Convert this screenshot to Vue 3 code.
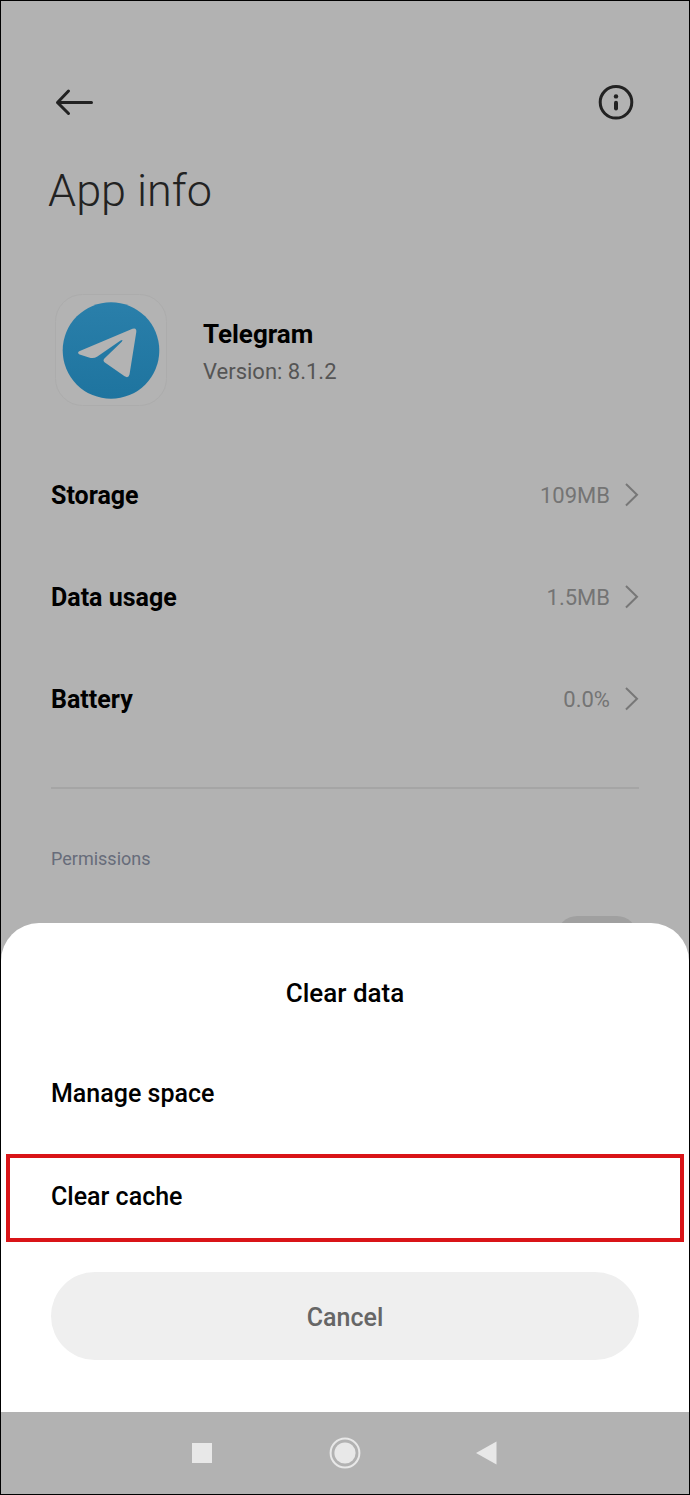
<script setup>
import { ref } from 'vue'

const usage = [
  { label: 'Storage', value: '109MB' },
  { label: 'Data usage', value: '1.5MB' },
  { label: 'Battery', value: '0.0%' },
]

const options = ['Manage space', 'Clear cache']
const highlighted = 'Clear cache'
const permission = ref(false)
</script>

<template>
  <div class="screen">
    <main class="info">
      <!-- Top bar -->
      <header class="topbar">
        <button type="button" class="icon-btn" aria-label="Back">
          <svg width="46" height="46" viewBox="0 0 46 46">
            <path d="M17.5 12 L6.5 23.5 L17.5 34.5 M6.5 23.5 H40.5" class="stroke" />
          </svg>
        </button>
        <button type="button" class="icon-btn" aria-label="Details">
          <svg width="46" height="46" viewBox="0 0 46 46">
            <circle cx="23" cy="23.300" r="15.8" class="stroke" />
            <circle cx="23" cy="17.4" r="2.2" fill="#222" />
            <path d="M23 23.8 V29.6" class="stroke stem" />
          </svg>
        </button>
      </header>

      <h1>App info</h1>

      <!-- App -->
      <section class="app">
        <svg class="logo" width="112" height="112" viewBox="0 0 112 112">
          <defs>
            <linearGradient id="blue" x1="0" y1="0" x2="0" y2="1">
              <stop offset="0" stop-color="#2a7faa" />
              <stop offset="1" stop-color="#1e749f" />
            </linearGradient>
          </defs>
          <rect x="0.5" y="0.5" width="111" height="111" rx="27" fill="#b3b3b3" stroke="#acacac" />
          <circle cx="56" cy="56.5" r="48.3" fill="url(#blue)" />
          <path
            d="M24.2 57.2 L77.5 34.8 Q81.8 33.4 81.3 38 L74.5 80.5 Q73.4 84.6 69.6 82.3 L49.5 68.2 Q47.6 66.6 49.4 64.6 L67 47.4 Q68.4 45.2 65.6 46.4 L42.4 62.4 Q38.5 64.8 34 63.4 L24.6 60.4 Q21.8 58.8 24.2 57.2 Z"
            fill="#b3b3b3"
          />
        </svg>
        <div class="app-text">
          <h2>Telegram</h2>
          <p>Version: 8.1.2</p>
        </div>
      </section>

      <!-- Usage -->
      <ul class="usage">
        <li v-for="item in usage" :key="item.label">
          <a href="#">
            <span class="label">{{ item.label }}</span>
            <span class="value">{{ item.value }}</span>
            <svg width="14" height="26" viewBox="0 0 14 26">
              <path d="M1 2 L12 12.7 L1 23.5" fill="none" stroke="#777" stroke-width="2" />
            </svg>
          </a>
        </li>
      </ul>

      <!-- Permissions -->
      <section class="permissions">
        <h3>Permissions</h3>
        <input v-model="permission" type="checkbox" class="switch" aria-label="Autostart" />
      </section>
    </main>

    <!-- Bottom sheet -->
    <section class="sheet" role="dialog" aria-labelledby="sheet-title">
      <h2 id="sheet-title">Clear data</h2>
      <button
        v-for="option in options"
        :key="option"
        type="button"
        class="option"
        :class="{ highlighted: option === highlighted }"
      >
        {{ option }}
      </button>
      <button type="button" class="cancel">Cancel</button>
    </section>

    <!-- System navigation -->
    <nav class="navbar">
      <button type="button" aria-label="Recent apps">
        <svg width="32" height="32" viewBox="0 0 32 32">
          <rect x="6" y="6" width="20" height="20" fill="#e8e8e8" />
        </svg>
      </button>
      <button type="button" aria-label="Home">
        <svg width="32" height="32" viewBox="0 0 32 32">
          <circle cx="16" cy="16" r="14.4" fill="none" stroke="#e8e8e8" stroke-width="2" />
          <circle cx="16" cy="16" r="10.6" fill="#e8e8e8" />
        </svg>
      </button>
      <button type="button" aria-label="Back">
        <svg width="32" height="32" viewBox="0 0 32 32">
          <path d="M4 16 L24.5 4.5 V27.5 Z" fill="#e8e8e8" />
        </svg>
      </button>
    </nav>
  </div>
</template>

<style>
body {
  margin: 0;
  background: #b2b2b2;
}
</style>

<style scoped>
.screen {
  box-sizing: border-box;
  min-height: 100vh;
  display: flex;
  flex-direction: column;
  border: 1px solid #000;
  background: #b2b2b2;
  font-family: Roboto, 'Liberation Sans', sans-serif;
  color: #000;
}

h1,
h2,
h3,
p,
ul {
  margin: 0;
  padding: 0;
}

button {
  padding: 0;
  border: 0;
  background: none;
  font-family: inherit;
}

svg {
  display: block;
}

.info {
  padding: 78px 50px 0;
}

/* Top bar */
.topbar {
  display: flex;
  justify-content: space-between;
}

.stroke {
  fill: none;
  stroke: #222;
  stroke-width: 3;
  stroke-linecap: round;
  stroke-linejoin: round;
}

.stem {
  stroke-width: 4;
}

h1 {
  margin: 38px -3px 0;
  font-size: 45px;
  line-height: 56px;
  font-weight: 300;
  color: #222;
}

/* App */
.app {
  display: flex;
  align-items: center;
  gap: 36px;
  margin-top: 75px;
  padding: 0 4px;
}

.app-text {
  padding-top: 6px;
}

.app h2 {
  font-size: 26px;
  line-height: 38px;
  font-weight: 700;
}

.app p {
  font-size: 22px;
  line-height: 38px;
  color: #555;
}

/* Usage */
.usage {
  margin-top: 38px;
  padding-bottom: 37px;
  border-bottom: 2px solid #a5a5a5;
  list-style: none;
}

.usage a {
  display: flex;
  align-items: center;
  height: 102px;
  color: inherit;
  text-decoration: none;
}

.label {
  flex: 1;
  font-size: 25px;
  font-weight: 700;
}

.value {
  margin-right: 15px;
  font-size: 22px;
  color: #747474;
}

/* Permissions */
.permissions {
  display: flex;
  flex-direction: column;
  padding-top: 57px;
}

.permissions h3 {
  font-size: 18px;
  line-height: 26px;
  font-weight: 400;
  color: #676c7a;
}

.switch {
  appearance: none;
  align-self: flex-end;
  width: 80px;
  height: 40px;
  margin: 44px 2px 0;
  border-radius: 20px;
  background: #a0a0a0;
}

/* Bottom sheet */
.sheet {
  z-index: 1;
  display: flex;
  flex-direction: column;
  margin-top: -33px;
  padding-bottom: 52px;
  border-radius: 38px 38px 0 0;
  background: #fff;
}

.sheet h2 {
  padding: 51px 0 30px;
  font-size: 26px;
  line-height: 38px;
  font-weight: 500;
  text-align: center;
}

.option {
  height: 102px;
  padding: 0 50px;
  font-size: 25px;
  font-weight: 500;
  color: #000;
  text-align: left;
}

.option.highlighted {
  height: 88px;
  margin: 10px 5px 30px;
  padding: 0 41px 4px;
  border: 4px solid #d91418;
}

.cancel {
  height: 88px;
  margin: 0 50px;
  padding-top: 2px;
  border-radius: 44px;
  background: #efefef;
  font-size: 25px;
  font-weight: 500;
  color: #666;
}

/* System navigation */
.navbar {
  flex: 1;
  display: flex;
  justify-content: center;
  align-items: center;
  gap: 111px;
  min-height: 82px;
}
</style>
